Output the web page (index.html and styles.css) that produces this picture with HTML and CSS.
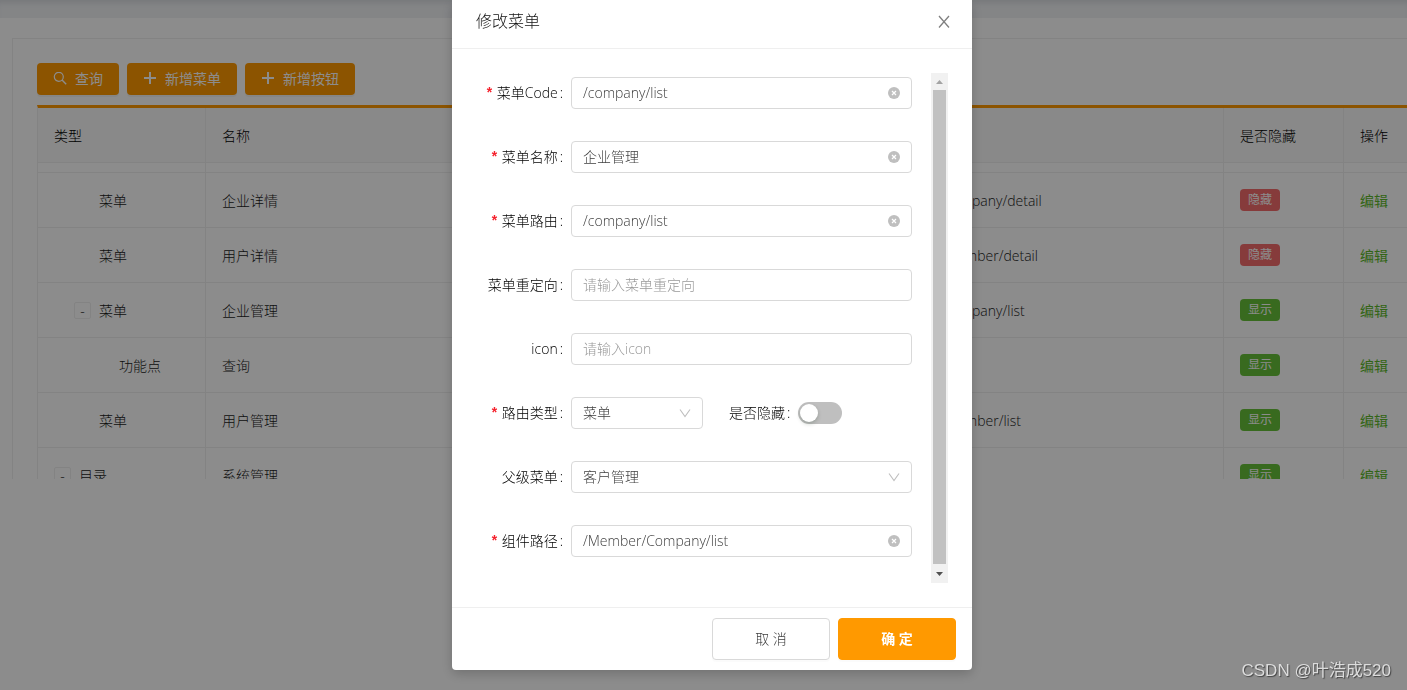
FILE: index.html
```html
<!DOCTYPE html>
<html lang="zh-CN">
<head>
<meta charset="utf-8">
<title>菜单管理</title>
<link rel="stylesheet" href="styles.css">
</head>
<body>
<svg class="sprite" aria-hidden="true">
  <symbol id="clear" viewBox="0 0 12 12"><circle cx="6" cy="6" r="6" fill="#bfbfbf"/><path d="M4 4l4 4M8 4l-4 4" stroke="#fff" stroke-width="1.2" fill="none"/></symbol>
  <symbol id="down" viewBox="0 0 12 12"><path d="M1 2.500l5 7 5-7" stroke="#bfbfbf" stroke-width="1.1" fill="none"/></symbol>
  <symbol id="plus" viewBox="0 0 14 14"><path d="M7 0v12M1 6h12" stroke="#fff" stroke-width="2" fill="none"/></symbol>
  <symbol id="search" viewBox="0 0 14 14"><circle cx="5.800" cy="4.800" r="4.500" stroke="#fff" stroke-width="1.200" fill="none"/><path d="M9 8l4.200 4.200" stroke="#fff" stroke-width="1.400" fill="none"/></symbol>
</svg>

<div class="page">
  <div class="topbar"></div>
  <main class="content">
    <section class="card">
      <div class="toolbar">
        <button class="btn btn-search"><svg><use href="#search"/></svg>查询</button>
        <button class="btn"><svg><use href="#plus"/></svg>新增菜单</button>
        <button class="btn"><svg><use href="#plus"/></svg>新增按钮</button>
      </div>
      <table class="grid">
        <colgroup><col class="col-type"><col><col class="col-path"><col class="col-hidden"><col class="col-action"></colgroup>
        <thead><tr><th>类型</th><th>名称</th><th></th><th>是否隐藏</th><th>操作</th></tr></thead>
        <tbody>
          <tr class="partial"><td></td><td></td><td></td><td></td><td></td></tr>
          <tr><td class="level-1"><span class="leaf">菜单</span></td><td>企业详情</td><td>/company/detail</td><td class="state"><span class="tag tag-red">隐藏</span></td><td><a href="#">编辑</a></td></tr>
          <tr><td class="level-1"><span class="leaf">菜单</span></td><td>用户详情</td><td>/member/detail</td><td class="state"><span class="tag tag-red">隐藏</span></td><td><a href="#">编辑</a></td></tr>
          <tr><td class="level-1"><button class="expander">-</button>菜单</td><td>企业管理</td><td>/company/list</td><td class="state"><span class="tag">显示</span></td><td><a href="#">编辑</a></td></tr>
          <tr><td class="level-2"><span class="leaf">功能点</span></td><td>查询</td><td></td><td class="state"><span class="tag">显示</span></td><td><a href="#">编辑</a></td></tr>
          <tr><td class="level-1"><span class="leaf">菜单</span></td><td>用户管理</td><td>/member/list</td><td class="state"><span class="tag">显示</span></td><td><a href="#">编辑</a></td></tr>
          <tr><td><button class="expander">-</button>目录</td><td>系统管理</td><td></td><td class="state"><span class="tag">显示</span></td><td><a href="#">编辑</a></td></tr>
        </tbody>
      </table>
    </section>
  </main>
</div>

<div class="mask">
  <div class="modal" role="dialog" aria-labelledby="dialog-title">
    <header class="modal-head">
      <h1 id="dialog-title">修改菜单</h1>
      <button class="close" aria-label="关闭"><svg viewBox="0 0 12 12"><path d="M1 .5l10 11.500M11 .5L1 12" stroke="#808080" stroke-width="1.300" fill="none"/></svg></button>
    </header>
    <div class="modal-body">
      <form class="form" id="menu-form">
        <div class="item"><label class="required" for="code">菜单Code</label><div class="field"><input id="code" type="text" value="/company/list"><button type="button" class="clear" aria-label="清除"><svg><use href="#clear"/></svg></button></div></div>
        <div class="item"><label class="required" for="name">菜单名称</label><div class="field"><input id="name" type="text" value="企业管理"><button type="button" class="clear" aria-label="清除"><svg><use href="#clear"/></svg></button></div></div>
        <div class="item"><label class="required" for="route">菜单路由</label><div class="field"><input id="route" type="text" value="/company/list"><button type="button" class="clear" aria-label="清除"><svg><use href="#clear"/></svg></button></div></div>
        <div class="item"><label for="redirect">菜单重定向</label><div class="field"><input id="redirect" type="text" placeholder="请输入菜单重定向"></div></div>
        <div class="item"><label for="icon">icon</label><div class="field"><input id="icon" type="text" placeholder="请输入icon"></div></div>
        <div class="item"><label class="required" for="kind">路由类型</label><div class="field field-short"><select id="kind"><option>菜单</option></select><svg class="arrow"><use href="#down"/></svg></div><label class="inline" for="hidden">是否隐藏</label><input class="switch" id="hidden" type="checkbox" role="switch"></div>
        <div class="item"><label for="parent">父级菜单</label><div class="field"><select id="parent"><option>客户管理</option></select><svg class="arrow"><use href="#down"/></svg></div></div>
        <div class="item"><label class="required" for="component">组件路径</label><div class="field"><input id="component" type="text" value="/Member/Company/list"><button type="button" class="clear" aria-label="清除"><svg><use href="#clear"/></svg></button></div></div>
      </form>
      <div class="scrollbar" aria-hidden="true">
        <svg viewBox="0 0 17 17"><path d="M5 11l3.500-4 3.500 4z" fill="#a3a3a3"/></svg>
        <div class="thumb"></div>
        <svg viewBox="0 0 17 17"><path d="M5 8l3.500 4L12 8z" fill="#505050"/></svg>
      </div>
    </div>
    <footer class="modal-foot">
      <button class="action">取 消</button>
      <button class="action action-primary" form="menu-form" type="button">确 定</button>
    </footer>
  </div>
</div>
<div class="watermark">CSDN @叶浩成520</div>
</body>
</html>
```
FILE: styles.css
```css
* { box-sizing: border-box; }
body {
  margin: 0;
  overflow: hidden;
  background: #fff;
  color: #404040;
  font: 300 14px/22px "Open Sans", "Noto Sans CJK SC", sans-serif;
}
button, input, select { font: inherit; color: inherit; margin: 0; }
button { cursor: pointer; }
.sprite { display: none; }

.page { height: 100vh; overflow: hidden; }
.topbar {
  height: 18px;
  background: #f0f2f5;
  box-shadow: inset 0 6px 6px -4px rgba(0, 21, 41, .12);
}
.content {
  height: calc(100vh - 211px - 18px);
  padding: 20px 0 0 12px;
  overflow: hidden;
}
.card {
  min-width: 1520px;
  padding: 24px;
  border: 1px solid #efefef;
}
.toolbar { display: flex; gap: 8px; margin-bottom: 10px; }
.btn {
  display: flex;
  align-items: center;
  justify-content: center;
  gap: 8px;
  width: 110px;
  height: 32px;
  padding: 0;
  border: 0;
  border-radius: 4px;
  background: #f90;
  color: #fff;
  font-weight: 400;
  box-shadow: 0 2px 0 rgba(0, 0, 0, .045);
}
.btn-search { width: 82px; }
.btn svg { width: 14px; height: 14px; }

.grid {
  width: 100%;
  table-layout: fixed;
  border-collapse: separate;
  border-spacing: 0;
  border-top: 3px solid #f90;
  border-left: 1px solid #efefef;
}
.col-type { width: 168px; }
.col-path { width: 300px; }
.col-hidden { width: 120px; }
.col-action { width: 163px; }
.grid th, .grid td {
  height: 55px;
  padding: 17px 16px 15px;
  border-right: 1px solid #efefef;
  border-bottom: 1px solid #efefef;
  text-align: left;
  color: #1a1a1a;
  font-weight: 300;
}
.grid th { background: #fafafa; color: #000; }
.grid .state { padding: 16px; }
.grid .partial td { height: 10px; padding: 0; }
.grid .level-1 { padding-left: 36px; }
.grid .level-2 { padding-left: 56px; }
.leaf { padding-left: 25px; }
.grid a { color: #5cb82a; font-weight: 400; text-decoration: none; }
.expander {
  width: 17px;
  height: 17px;
  margin-right: 8px;
  padding: 0;
  border: 1px solid #efefef;
  border-radius: 2px;
  background: #fff;
  line-height: 15px;
}
.tag {
  display: block;
  width: 40px;
  border-radius: 4px;
  background: #67c23a;
  color: #fff;
  font-size: 12px;
  font-weight: 400;
  line-height: 22px;
  text-align: center;
}
.tag-red { background: #f56c6c; }

.mask {
  position: fixed;
  inset: 0;
  display: flex;
  justify-content: center;
  align-items: flex-start;
  padding-left: 17px;
  background: rgba(0, 0, 0, .45);
}
.modal {
  width: 520px;
  background: #fff;
  border-radius: 0 0 4px 4px;
  box-shadow: 0 4px 12px rgba(0, 0, 0, .2);
}
.modal-head {
  display: flex;
  justify-content: space-between;
  align-items: center;
  padding: 10px 20px 16px 24px;
  border-bottom: 1px solid #efefef;
}
.modal-head h1 {
  margin: 0;
  color: #111;
  font-size: 16px;
  font-weight: 300;
  line-height: 22px;
}
.close { width: 16px; height: 16px; padding: 2px; border: 0; background: none; }
.close svg { display: block; width: 12px; height: 13px; }
.modal-body { display: flex; gap: 19px; padding: 24px; }
.form {
  flex: 1;
  display: flex;
  flex-direction: column;
  gap: 32px;
  padding: 4px 0 26px;
}
.item { display: flex; align-items: center; height: 32px; }
.item label {
  width: 95px;
  padding-right: 8px;
  color: #000;
  text-align: right;
  white-space: nowrap;
}
.item label::after { content: ":"; margin-left: 2px; }
.required::before {
  content: "*";
  margin-right: 3px;
  color: #f5222d;
  font-family: "Liberation Mono", monospace;
  font-weight: 700;
}
.item .inline { width: auto; padding: 0 8px 0 26px; }
.field { position: relative; flex: 1; height: 32px; }
.field-short { flex: 0 0 132px; }
.field input, .field select {
  display: block;
  width: 100%;
  height: 32px;
  padding: 3px 30px 5px 11px;
  border: 1px solid #d9d9d9;
  border-radius: 4px;
  background: #fff;
  appearance: none;
  outline: 0;
}
.field select { padding: 4px 30px 4px 11px; }
.field input::placeholder { color: #999; opacity: 1; }
.clear {
  position: absolute;
  top: 10px;
  right: 12px;
  width: 12px;
  height: 12px;
  padding: 0;
  border: 0;
  background: none;
}
.clear svg { display: block; width: 12px; height: 12px; }
.arrow {
  position: absolute;
  top: 10px;
  right: 12px;
  width: 12px;
  height: 12px;
  pointer-events: none;
}
.switch {
  display: flex;
  align-items: center;
  width: 44px;
  height: 22px;
  padding: 2px;
  border-radius: 11px;
  background: #bfbfbf;
  appearance: none;
}
.switch::before {
  content: "";
  width: 18px;
  height: 18px;
  border-radius: 50%;
  background: #fff;
  box-shadow: 0 2px 4px rgba(0, 35, 11, .2);
}
.switch:checked { justify-content: flex-end; background: #f90; }
.scrollbar {
  display: flex;
  flex-direction: column;
  width: 17px;
  padding-bottom: 2px;
  background: #f1f1f1;
}
.scrollbar svg { display: block; width: 17px; height: 17px; }
.thumb { flex: 1; margin: 0 2px; background: #c1c1c1; }
.modal-foot {
  display: flex;
  justify-content: flex-end;
  gap: 8px;
  padding: 10px 16px;
  border-top: 1px solid #efefef;
}
.action {
  width: 118px;
  height: 42px;
  border: 1px solid #d9d9d9;
  border-radius: 4px;
  background: #fff;
  box-shadow: 0 2px 0 rgba(0, 0, 0, .015);
}
.action-primary { border-color: #f90; background: #f90; color: #fff; font-weight: 700; }

.watermark {
  position: fixed;
  right: 16px;
  bottom: 7px;
  color: #dcdcdc;
  font: 400 17px/24px "Liberation Sans", "Noto Sans CJK SC", sans-serif;
  text-shadow: 1px 1px 1px #444;
}
```
